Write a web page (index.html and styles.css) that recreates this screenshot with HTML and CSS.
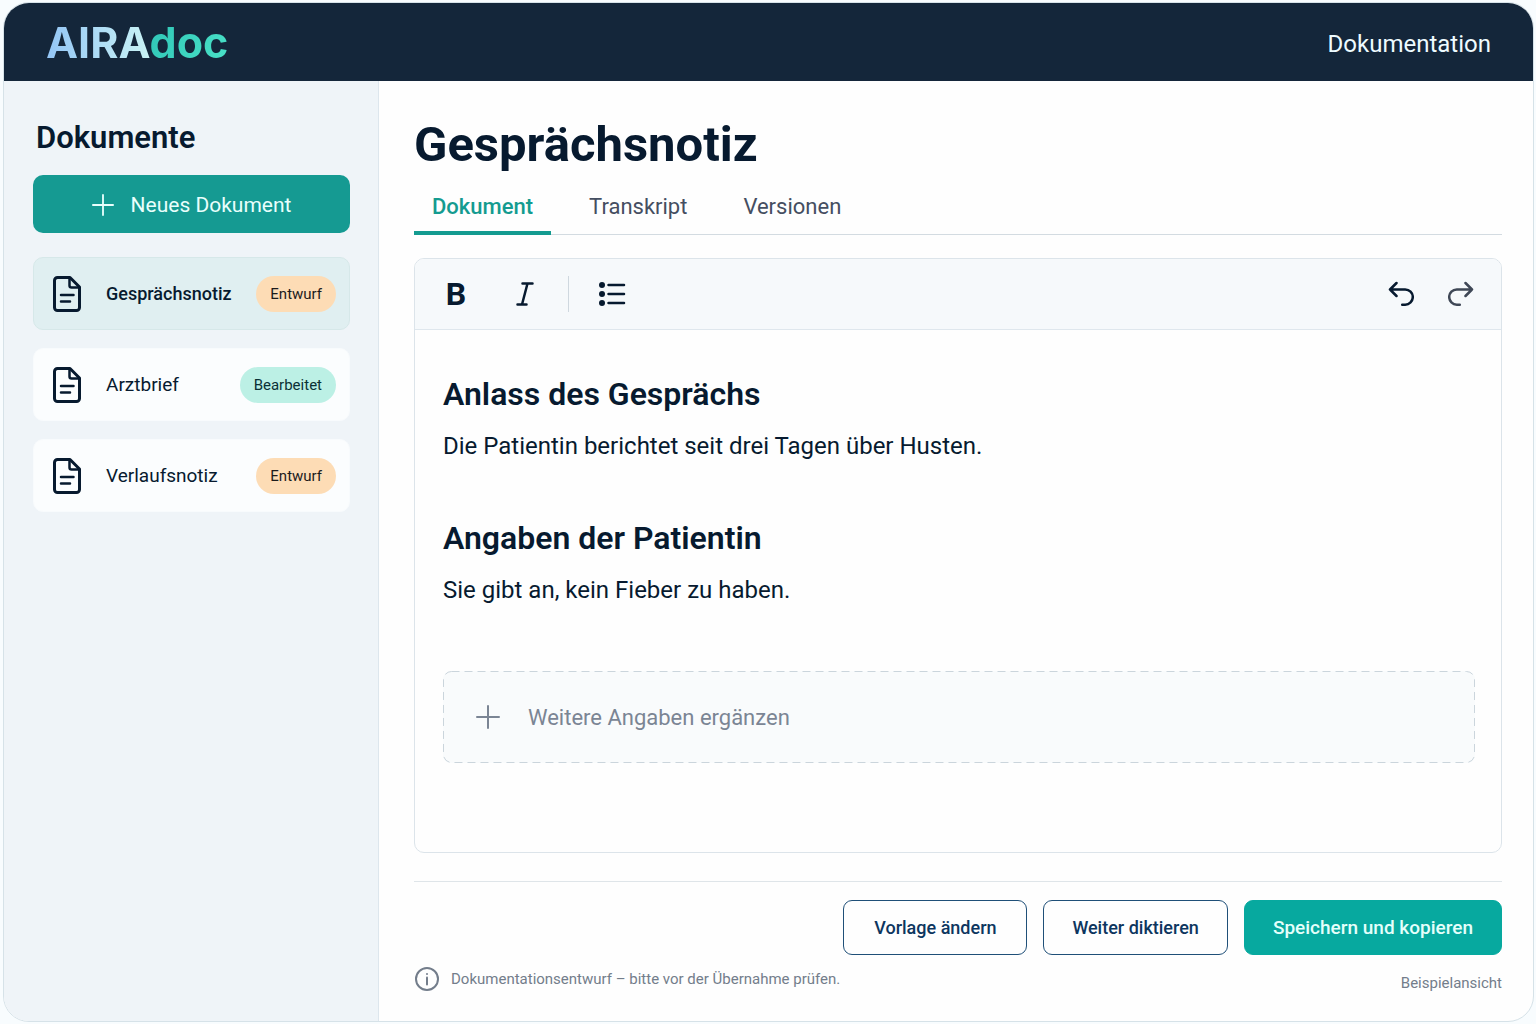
FILE: index.html
```html
<!DOCTYPE html>
<html lang="de">
<head>
<meta charset="utf-8">
<meta name="viewport" content="width=device-width, initial-scale=1">
<title>AIRAdoc – Dokumentation</title>
<link rel="stylesheet" href="styles.css">
</head>
<body>
<svg class="sprite" aria-hidden="true">
  <symbol id="icon-file" viewBox="0 0 28 36">
    <path d="M4.500 1.500H17L26.500 11v20.500a3 3 0 0 1-3 3h-19a3 3 0 0 1-3-3v-27a3 3 0 0 1 3-3z"/>
    <path stroke-width="2.500" d="M16.500 2v7.500a2 2 0 0 0 2 2H26"/>
    <path stroke-width="2.500" d="M8 19h12.500M8 25.500h9"/>
  </symbol>
  <symbol id="icon-plus" viewBox="0 0 24 24">
    <path d="M12 1v22M1 12h22"/>
  </symbol>
</svg>
<div class="app">
  <header class="topbar">
    <a class="logo" href="#"><span class="logo-aira">AIRA</span><span class="logo-doc">doc</span></a>
    <a class="topbar-link" href="#">Dokumentation</a>
  </header>
  <div class="layout">
    <aside class="sidebar">
      <h2 class="sidebar-title">Dokumente</h2>
      <button class="new-doc" type="button"><svg class="icon-plus"><use href="#icon-plus"/></svg>Neues Dokument</button>
      <nav class="doc-list" aria-label="Dokumente">
        <a class="doc doc-active" href="#"><svg class="icon-file"><use href="#icon-file"/></svg><span class="doc-name">Gesprächsnotiz</span><span class="badge badge-draft">Entwurf</span></a>
        <a class="doc" href="#"><svg class="icon-file"><use href="#icon-file"/></svg><span class="doc-name">Arztbrief</span><span class="badge badge-edited">Bearbeitet</span></a>
        <a class="doc" href="#"><svg class="icon-file"><use href="#icon-file"/></svg><span class="doc-name">Verlaufsnotiz</span><span class="badge badge-draft">Entwurf</span></a>
      </nav>
    </aside>
    <main class="main">
      <h1 class="title">Gesprächsnotiz</h1>
      <div class="tabs" role="tablist">
        <button class="tab tab-active" type="button" role="tab" aria-selected="true">Dokument</button>
        <button class="tab" type="button" role="tab" aria-selected="false">Transkript</button>
        <button class="tab" type="button" role="tab" aria-selected="false">Versionen</button>
      </div>
      <section class="editor">
        <div class="toolbar" role="toolbar" aria-label="Formatierung">
          <button class="tool tool-bold" type="button" aria-label="Fett">B</button>
          <button class="tool" type="button" aria-label="Kursiv"><svg width="18" height="24" viewBox="0 0 18 24"><path d="M6.500 1.500h10M1.500 22.500h9M11.500 1.500 6 22.500"/></svg></button>
          <span class="divider"></span>
          <button class="tool" type="button" aria-label="Liste"><svg width="28" height="26" viewBox="0 0 28 26"><path d="M10.500 4H26M10.500 13H26M10.500 22H26"/><g class="dots"><circle cx="4" cy="4" r="3"/><circle cx="4" cy="13" r="3"/><circle cx="4" cy="22" r="3"/></g></svg></button>
          <button class="tool tool-undo" type="button" aria-label="Rückgängig"><svg width="26" height="26" viewBox="0 0 26 26"><path d="M8.500 2 2 8.500 8.500 15M2 8.500h15.200a7.600 7.600 0 0 1 0 15.200h-3"/></svg></button>
          <button class="tool tool-redo" type="button" aria-label="Wiederholen"><svg width="26" height="26" viewBox="0 0 26 26"><path d="M17.500 2l6.500 6.500-6.500 6.500M24 8.500H8.800a7.600 7.600 0 0 0 0 15.200h3"/></svg></button>
        </div>
        <div class="content">
          <h2 class="section-title">Anlass des Gesprächs</h2>
          <p class="section-text">Die Patientin berichtet seit drei Tagen über Husten.</p>
          <h2 class="section-title">Angaben der Patientin</h2>
          <p class="section-text">Sie gibt an, kein Fieber zu haben.</p>
          <button class="add" type="button">
            <svg class="add-frame" aria-hidden="true"><rect x=".5" y=".5" rx="8"/></svg>
            <svg class="icon-plus"><use href="#icon-plus"/></svg>Weitere Angaben ergänzen
          </button>
        </div>
      </section>
      <footer class="footer">
        <div class="actions">
          <button class="btn" type="button">Vorlage ändern</button>
          <button class="btn" type="button">Weiter diktieren</button>
          <button class="btn btn-primary" type="button">Speichern und kopieren</button>
        </div>
        <div class="notes">
          <p class="note"><svg width="24" height="24" viewBox="0 0 24 24"><circle cx="12" cy="12" r="11"/><path d="M12 10.500v7"/><path d="M12 7v.1"/></svg>Dokumentationsentwurf – bitte vor der Übernahme prüfen.</p>
          <p class="example">Beispielansicht</p>
        </div>
      </footer>
    </main>
  </div>
</div>
</body>
</html>
```
FILE: styles.css
```css
* { box-sizing: border-box; }

body {
  margin: 0;
  padding: 2px 2px 2px 3px;
  min-height: 100vh;
  display: flex;
  background: #f8fcfe;
  color: #071a2f;
  font-family: Roboto, "Liberation Sans", sans-serif;
}

h1, h2, p { margin: 0; }
a { color: inherit; text-decoration: none; }
button { font: inherit; color: inherit; border: 0; background: none; padding: 0; cursor: pointer; }
svg { fill: none; stroke: currentColor; stroke-width: 2; stroke-linecap: round; stroke-linejoin: round; flex: none; }
.sprite { position: absolute; width: 0; height: 0; }

.app {
  flex: 1;
  display: flex;
  flex-direction: column;
  border: 1px solid #d6e2e8;
  border-radius: 26px;
  overflow: hidden;
  background: #fefefe;
}

.topbar {
  display: flex;
  align-items: center;
  justify-content: space-between;
  height: 78px;
  padding: 0 42px;
  background: #14263a;
}
.logo { font: 700 43px/48px Inter, sans-serif; }
.logo-aira {
  color: transparent;
  background: linear-gradient(90deg, #93c5f5, #c9f3f5);
  background-clip: text;
}
.logo-doc {
  color: transparent;
  background: linear-gradient(120deg, #2ec4b6, #4be3c8);
  background-clip: text;
}
.topbar-link { color: #eefbff; font-size: 24px; line-height: 32px; padding-top: 4px; }

.layout { flex: 1; display: flex; }

.sidebar {
  flex: none;
  width: 375px;
  padding: 37px 28px 36px 29px;
  background: #eff4f8;
  border-right: 1px solid #dde6ed;
}
.sidebar-title { padding-left: 3px; font-size: 31px; line-height: 40px; font-weight: 600; }
.new-doc {
  display: flex;
  align-items: center;
  justify-content: center;
  gap: 17px;
  width: 100%;
  height: 58px;
  padding-top: 2px;
  margin-top: 17px;
  border-radius: 10px;
  background: #159a92;
  color: #e9fffc;
  font-size: 21px;
}
.icon-plus { width: 24px; height: 24px; }
.new-doc .icon-plus { width: 22px; height: 22px; }
.doc-list { display: flex; flex-direction: column; gap: 18px; margin-top: 24px; }
.doc {
  display: flex;
  align-items: center;
  height: 73px;
  padding: 0 13px 0 19px;
  border: 1px solid #f8fbfd;
  border-radius: 10px;
  background: #fbfdfe;
}
.doc-active { background: #e0eff1; border-color: #d6e8e9; }
.icon-file { width: 28px; height: 36px; stroke-width: 3; }
.doc-name { flex: 1; padding-left: 25px; font-size: 19px; }
.doc-active .doc-name { font-size: 18px; font-weight: 500; }
.badge { padding: 0 14px; border-radius: 18px; font-size: 15px; line-height: 36px; }
.badge-draft { background: #fddcb5; color: #1c1b1c; }
.badge-edited { background: #bcf0e5; color: #0b3036; }

.main { flex: 1; display: flex; flex-direction: column; padding: 34px 31px 26px 35px; }
.title { font-size: 49px; line-height: 60px; font-weight: 700; }

.tabs { display: flex; gap: 20px; border-bottom: 1px solid #d3dbe1; margin-top: 4px; }
.tab {
  margin-bottom: -1px;
  padding: 18px 18px 14px;
  border-bottom: 4px solid transparent;
  color: #454e61;
  font-size: 22px;
  line-height: 20px;
}
.tab-active { color: #149b90; border-color: #149b90; font-weight: 500; }

.editor {
  flex: 1;
  margin-top: 23px;
  border: 1px solid #dce4ea;
  border-radius: 10px;
  overflow: hidden;
}
.toolbar {
  display: flex;
  align-items: center;
  height: 71px;
  padding: 0 26px 0 27px;
  background: #f6f9fb;
  border-bottom: 1px solid #dfe7ed;
}
.tool { display: grid; place-items: center; width: 28px; height: 36px; }
.tool + .tool { margin-left: 41px; }
.tool svg { stroke-width: 2.5; }
.tool-bold { font-size: 32px; line-height: 32px; font-weight: 700; }
.dots { fill: currentColor; stroke: none; }
.divider { width: 1px; height: 36px; margin: 0 29px; background: #cfd8df; }
.toolbar .tool-undo { margin-left: auto; }
.toolbar .tool-redo { margin-left: 32px; color: #3f4856; }

.content { padding: 44px 26px 88px 28px; }
.section-title { font-size: 32px; line-height: 40px; font-weight: 600; }
.section-text { margin: 16px 0 56px; font-size: 24px; line-height: 32px; }
.add {
  position: relative;
  display: flex;
  align-items: center;
  gap: 28px;
  width: 100%;
  height: 92px;
  margin-top: 65px;
  padding: 0 33px;
  border-radius: 8px;
  background: #f9fbfc;
  color: #7b8594;
  font-size: 22px;
}
.add-frame { position: absolute; inset: 0; width: 100%; height: 100%; }
.add-frame rect {
  width: calc(100% - 1px);
  height: calc(100% - 1px);
  stroke: #cbd5dc;
  stroke-width: 1;
  stroke-dasharray: 8 5;
  stroke-linecap: butt;
}

.footer { margin-top: 28px; padding-top: 18px; border-top: 1px solid #dfe5e9; }
.actions { display: flex; justify-content: flex-end; gap: 16px; }
.btn {
  height: 55px;
  min-width: 184px;
  padding: 0 28px;
  border: 1px solid #1f4f78;
  border-radius: 9px;
  color: #0d365f;
  font-size: 18px;
  font-weight: 500;
}
.btn-primary { background: #07a99f; border-color: #07a99f; color: #e4fffb; font-size: 19px; }
.notes { display: flex; justify-content: space-between; margin-top: 12px; color: #737d8b; font-size: 15px; line-height: 24px; }
.note { display: flex; gap: 12px; padding-left: 1px; }
.example { padding-top: 4px; }
```
